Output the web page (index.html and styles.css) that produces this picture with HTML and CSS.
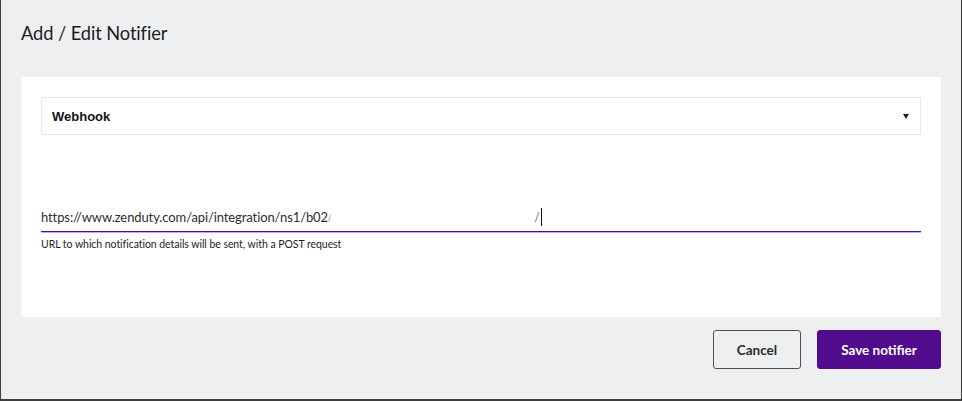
FILE: index.html
```html
<!DOCTYPE html>
<html>
<head>
<meta charset="utf-8">
<link rel="stylesheet" href="styles.css">
</head>
<body>
<div class="page">
  <header class="head">
    <h1 class="title">Add / Edit Notifier</h1>
  </header>
  <section class="panel">
    <div class="select">
      <span class="select-value">Webhook</span>
      <span class="caret"></span>
    </div>
    <div class="field">
      <div class="input">
        <span class="url">https://www.zenduty.com/api/integration/ns1/b02</span><span class="cut"></span><span class="gap"></span><span class="slash">/</span><span class="cursor"></span>
      </div>
      <div class="help">URL to which notification details will be sent, with a POST request</div>
    </div>
  </section>
  <footer class="actions">
    <button class="btn btn-cancel">Cancel</button>
    <button class="btn btn-save">Save notifier</button>
  </footer>
</div>
</body>
</html>
```
FILE: styles.css
```css
* { box-sizing: border-box; }
html, body { margin: 0; padding: 0; }
body { background: #3c3c3c; }
.page {
  width: 962px;
  height: 401px;
  background: #eeeff1;
  border-left: 1px solid #3e3e3e;
  border-right: 1px solid #3e3e3e;
  border-bottom: 2px solid #3e3e3e;
  padding: 0 20px;
  display: flex;
  flex-direction: column;
  font-family: Lato, "Open Sans", sans-serif;
  color: #1d1d1f;
}
.head {
  height: 77px;
  display: flex;
  align-items: flex-start;
}
.title {
  margin: 0;
  padding-top: 21px;
  font-size: 18.3px;
  font-weight: 400;
  line-height: 24px;
  letter-spacing: -0.1px;
  color: #1c1c1e;
}
.panel {
  background: #fff;
  height: 240px;
  padding: 20px;
}
.select {
  height: 38px;
  border: 1px solid #e8e8e8;
  border-radius: 2px;
  display: flex;
  align-items: center;
  justify-content: space-between;
  padding: 0 11px 0 10px;
}
.select-value {
  font-family: "Liberation Sans", Arial, sans-serif;
  font-weight: 700;
  font-size: 13px;
  color: #151515;
}
.caret {
  width: 0;
  height: 0;
  border-left: 3px solid transparent;
  border-right: 3px solid transparent;
  border-top: 5px solid #222;
}
.field { margin-top: 65px; }
.input {
  height: 32px;
  padding-top: 2px;
  border-bottom: 1px solid #520e90;
  box-shadow: 0 1px 0 rgba(90, 20, 160, 0.35);
  display: flex;
  align-items: center;
  font-size: 13px;
  letter-spacing: -0.1px;
  color: #2e2e2e;
  white-space: nowrap;
}
.cut {
  display: inline-block;
  width: 2px;
  height: 7px;
  margin-left: 1px;
  margin-top: 3px;
  border-left: 1px solid #b0b0b0;
  transform: skewX(-15deg);
}
.gap { display: inline-block; width: 203px; }
.slash { color: #777; }
.cursor {
  display: inline-block;
  width: 1px;
  height: 18px;
  background: #111;
  margin-left: 1px;
}
.help {
  margin-top: 5px;
  font-size: 10.5px;
  letter-spacing: -0.05px;
  line-height: 14px;
  color: #1e1e1e;
}
.actions {
  margin-top: 13px;
  display: flex;
  justify-content: flex-end;
  gap: 16px;
}
.btn {
  height: 39px;
  border-radius: 3px;
  font-family: Lato, "Open Sans", sans-serif;
  font-weight: 700;
  font-size: 13.5px;
  cursor: pointer;
}
.btn-cancel {
  width: 88px;
  background: transparent;
  border: 1px solid #4a4f57;
  color: #2a2a2a;
}
.btn-save {
  width: 124px;
  background: #500c8c;
  border: 1px solid #500c8c;
  color: #fff;
}
```
